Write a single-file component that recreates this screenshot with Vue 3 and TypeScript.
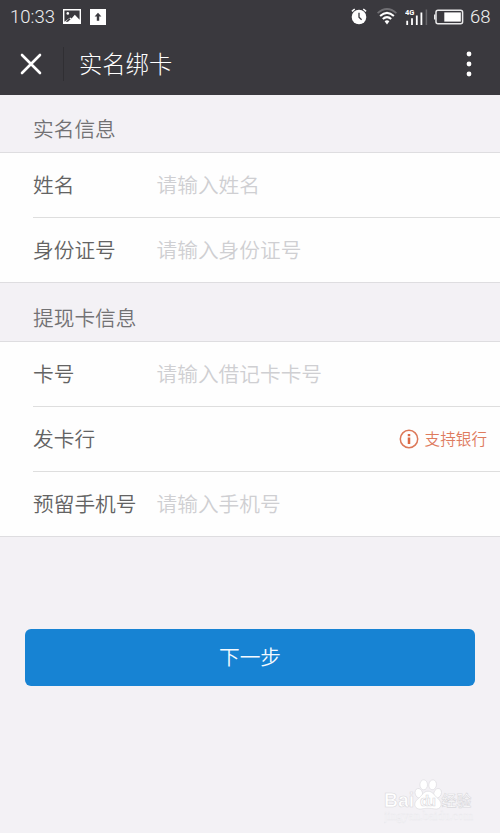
<script setup lang="ts">
interface Field {
  label: string
  placeholder?: string
  link?: string
}

interface Section {
  title: string
  fields: Field[]
}

const sections: Section[] = [
  {
    title: '实名信息',
    fields: [
      { label: '姓名', placeholder: '请输入姓名' },
      { label: '身份证号', placeholder: '请输入身份证号' },
    ],
  },
  {
    title: '提现卡信息',
    fields: [
      { label: '卡号', placeholder: '请输入借记卡卡号' },
      { label: '发卡行', link: '支持银行' },
      { label: '预留手机号', placeholder: '请输入手机号' },
    ],
  },
]
</script>

<template>
  <div class="screen">
    <header class="top">
      <div class="status">
        <span class="time">10:33</span>
        <svg class="photo" width="18" height="15" viewBox="0 0 18 15">
          <path d="M0 0h18v15H0z" fill="#fff" />
          <path d="M1.4 1.4h15.2v9.4l-4.8-5-3.2 3.6-1.4-1L1.4 12.7z" fill="#3a393e" />
          <circle cx="4.8" cy="4.4" r="1.3" fill="#fff" />
          <path d="M2.6 12.7l3.8-3.5 1.2 1-2.6 2.5z" fill="#3a393e" />
        </svg>
        <svg class="upload" width="16" height="16" viewBox="0 0 16 16">
          <path d="M0 0h16v16H0z" fill="#fff" />
          <path d="M8 3.8l3.4 3.8H9.2v4.2H6.8V7.6H4.6z" fill="#3a393e" />
        </svg>
        <div class="indicators">
          <svg class="alarm" width="16" height="17" viewBox="0 0 16 17">
            <circle cx="8" cy="9" r="7.3" fill="#fff" />
            <path d="M.9 3.4L3.7 1M15.1 3.4L12.3 1" stroke="#fff" stroke-width="1.5" />
            <path d="M8 4.7v4.6l2.6 2.5" fill="none" stroke="#3a393e" stroke-width="1.3" />
          </svg>
          <svg class="wifi" width="20" height="17" viewBox="0 0 20 17">
            <path d="M.6 5.1Q10-3.1 19.4 5.1" fill="none" stroke="#706f73" stroke-width="1.7" />
            <path d="M3.1 8.1Q10 1.7 16.9 8.1M5.8 11.1Q10 7.2 14.2 11.1" fill="none" stroke="#fff" stroke-width="2" />
            <path d="M7.6 13.2Q10 11.4 12.4 13.2L10 16.5z" fill="#fff" />
          </svg>
          <svg class="signal" width="23" height="18" viewBox="0 0 23 18">
            <text x="0" y="7" class="network">4G</text>
            <path d="M2.2 12.7V17M7 10.2V17M11.8 7.4V17M16.4 4.4V17" stroke="#fff" stroke-width="1.8" />
            <path d="M21.4 1.5V17" stroke="#68676b" stroke-width="1.5" />
          </svg>
          <svg class="battery" width="30" height="16" viewBox="0 0 30 16">
            <rect x="2" y="1.2" width="26.6" height="13.5" rx="2" fill="none" stroke="#e9e9ea" stroke-width="1.5" />
            <path d="M.7 5.5v5" stroke="#e9e9ea" stroke-width="1.4" />
            <path d="M10.3 3.4h16.5v9.2H10.3z" fill="#fff" />
          </svg>
          <span class="percent">68</span>
        </div>
      </div>
      <nav class="nav">
        <button class="close" type="button">
          <svg width="22" height="22" viewBox="0 0 22 22">
            <path d="M2 2l18 18M20 2L2 20" stroke="#fff" stroke-width="2.6" stroke-linecap="round" />
          </svg>
        </button>
        <h1 class="title">实名绑卡</h1>
        <button class="more" type="button">
          <svg width="6" height="26" viewBox="0 0 6 26">
            <circle cx="3" cy="3" r="2.4" fill="#fff" />
            <circle cx="3" cy="13" r="2.4" fill="#fff" />
            <circle cx="3" cy="23" r="2.4" fill="#fff" />
          </svg>
        </button>
      </nav>
    </header>

    <section v-for="section in sections" :key="section.title">
      <h2 class="heading">{{ section.title }}</h2>
      <div class="list">
        <div v-for="field in section.fields" :key="field.label" class="row">
          <span class="label">{{ field.label }}</span>
          <span v-if="field.placeholder" class="placeholder">{{ field.placeholder }}</span>
          <a v-if="field.link" class="banks">
            <svg width="20" height="20" viewBox="0 0 20 20">
              <circle cx="10" cy="10" r="8.7" fill="none" stroke="#dc7858" stroke-width="1.5" />
              <path d="M10 5v2.2M10 8.4V15" stroke="#dc6844" stroke-width="2.5" />
            </svg>
            <span>{{ field.link }}</span>
          </a>
        </div>
      </div>
    </section>

    <button class="submit" type="button">下一步</button>

    <svg class="watermark" width="96" height="48" viewBox="0 0 96 48">
      <g fill="#fff" stroke="#d9d8dc" stroke-width=".6">
        <text x="0" y="30" class="brand" textLength="30" lengthAdjust="spacingAndGlyphs">Bai</text>
        <ellipse cx="34.8" cy="16.2" rx="3.7" ry="4.8" transform="rotate(-15 34.8 16.2)" />
        <ellipse cx="39.7" cy="7.8" rx="3.8" ry="5" />
        <ellipse cx="48.6" cy="7.8" rx="3.8" ry="5" transform="rotate(8 48.6 7.8)" />
        <ellipse cx="53.6" cy="16.2" rx="3.7" ry="4.8" transform="rotate(20 53.6 16.2)" />
        <path d="M44 14.2c-4.7 0-6 4.6-9.3 7.1-7.3 5.4-3.2 12 3 10.6 4.5-.9 8.2-.9 12.7 0 6.7 1.4 9.4-5.7 3.2-10.7-3.6-3-5-7-9.6-7z" />
        <text x="36" y="29" class="du" textLength="16">du</text>
        <text x="57.5" y="28.5" class="experience">经验</text>
      </g>
      <text x="0" y="43" class="domain" textLength="89">jingyan.baidu.com</text>
    </svg>
  </div>
</template>

<style>
body {
  margin: 0;
  background: #f3f1f5;
}
</style>

<style scoped>
.screen {
  position: relative;
  width: 500px;
  height: 833px;
  overflow: hidden;
  background: #f3f1f5;
  color: #636363;
  font-family: "Noto Sans CJK SC", sans-serif;
  font-weight: 350;
}

button {
  padding: 0;
  border: 0;
  background: none;
  font: inherit;
}

svg {
  display: block;
  flex: none;
}

.top {
  height: 95px;
  background: #3a393e;
  color: #fff;
}

.status {
  display: flex;
  align-items: center;
  height: 33px;
  padding: 0 10px;
  font-family: Roboto, sans-serif;
  font-weight: 300;
  font-size: 18.5px;
  color: #f0f0f1;
}

.time {
  width: 44px;
  margin-right: 9px;
}

.upload {
  margin-left: 9px;
}

.indicators {
  display: flex;
  align-items: center;
  margin-left: auto;
}

.wifi {
  margin-left: 10px;
}

.signal {
  margin-left: 8px;
}

.battery {
  margin-left: 6px;
}

.percent {
  margin-left: 6px;
  width: 20px;
}

.network {
  font: 700 7.5px Roboto, sans-serif;
  fill: #fff;
}

.nav {
  display: flex;
  align-items: center;
  height: 62px;
}

.close {
  display: flex;
  align-items: center;
  width: 64px;
  height: 34px;
  padding-left: 20px;
  box-sizing: border-box;
  border-right: 1px solid #302f33;
}

.title {
  margin: 0 0 0 15px;
  padding-bottom: 3px;
  font-size: 23.3px;
  font-weight: 300;
  line-height: 34px;
}

.more {
  margin: 0 28px 0 auto;
}

.heading {
  height: 57px;
  margin: 0;
  padding: 5px 0 0 33px;
  box-sizing: border-box;
  font-size: 20.7px;
  font-weight: 350;
  line-height: 57px;
  color: #727174;
}

section + section .heading {
  height: 58px;
  padding-top: 6px;
}

.list {
  border-top: 1px solid #dedde0;
  border-bottom: 1px solid #dedde0;
  background: #fefefe;
}

.row {
  display: flex;
  align-items: center;
  height: 65px;
  margin-left: 33px;
  box-sizing: border-box;
  border-bottom: 1px solid #dedede;
  font-size: 20.7px;
}

.row:last-child {
  height: 64px;
  border-bottom: 0;
}

.label {
  width: 123.5px;
}

.label,
.placeholder {
  padding-bottom: 2px;
}

.placeholder {
  color: #cfcfd2;
}

.banks {
  display: flex;
  align-items: center;
  gap: 6px;
  margin: 0 13px 0 auto;
  color: #de7b5e;
  font-size: 15.6px;
}

.banks span {
  padding-bottom: 3px;
}

.submit {
  display: block;
  width: 450px;
  height: 57px;
  margin: 92px 0 0 25px;
  padding-bottom: 2px;
  border-radius: 6px;
  background: #1783d3;
  color: #f4faff;
  font-size: 20.7px;
  line-height: 55px;
}

.watermark {
  position: absolute;
  left: 384px;
  top: 777px;
}

.brand {
  font: 700 21px "Liberation Sans", sans-serif;
}

.du {
  font: 700 15px "Liberation Sans", sans-serif;
}

.experience {
  font: 500 15px "Noto Sans CJK SC", sans-serif;
}

.domain {
  font: 12px "Liberation Serif", serif;
  fill: #f8f8fa;
  stroke: #e9e8ec;
  stroke-width: .3px;
}
</style>
